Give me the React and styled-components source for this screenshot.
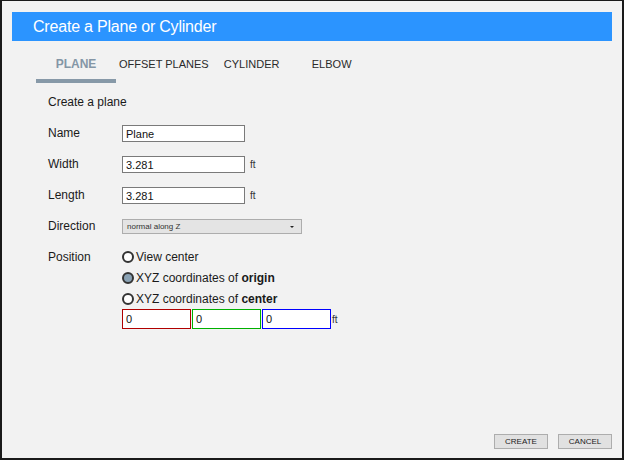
import React from "react";
import styled, { createGlobalStyle } from "styled-components";

const GlobalStyle = createGlobalStyle`
  html, body {
    margin: 0;
    padding: 0;
  }
  body {
    font-family: "Liberation Sans", Arial, sans-serif;
    background: #f2f2f2;
  }
`;

const tabs = ["PLANE", "OFFSET PLANES", "CYLINDER", "ELBOW"];

const positions = [
  { label: "View center" },
  { label: "XYZ coordinates of ", bold: "origin", checked: true },
  { label: "XYZ coordinates of ", bold: "center" },
];

export default function App() {
  return (
    <React.Fragment>
      <GlobalStyle />
      <Window>
        <TitleBar>Create a Plane or Cylinder</TitleBar>
        <TabRow>
          {tabs.map((t, i) => (
            <Tab key={t} active={i === 0}>
              {t}
            </Tab>
          ))}
        </TabRow>
        <Content>
          <Heading>Create a plane</Heading>
          <Form>
            <Label>Name</Label>
            <Field>
              <TextInput defaultValue="Plane" />
            </Field>

            <Label>Width</Label>
            <Field>
              <TextInput defaultValue="3.281" />
              <Unit>ft</Unit>
            </Field>

            <Label>Length</Label>
            <Field>
              <TextInput defaultValue="3.281" />
              <Unit>ft</Unit>
            </Field>

            <Label>Direction</Label>
            <Field>
              <Select>
                <span>normal along Z</span>
                <Caret />
              </Select>
            </Field>

            <Label>Position</Label>
            <RadioGroup>
              {positions.map((p) => (
                <RadioRow key={p.label + (p.bold || "")}>
                  <Radio checked={p.checked} />
                  <span>
                    {p.label}
                    {p.bold && <b>{p.bold}</b>}
                  </span>
                </RadioRow>
              ))}
              <CoordRow>
                <CoordInput defaultValue="0" color="#b00000" />
                <CoordInput defaultValue="0" color="#00b000" />
                <CoordInput defaultValue="0" color="#0000ff" />
                <Unit>ft</Unit>
              </CoordRow>
            </RadioGroup>
          </Form>
        </Content>
        <Footer>
          <Button>CREATE</Button>
          <Button>CANCEL</Button>
        </Footer>
      </Window>
    </React.Fragment>
  );
}

const Window = styled.div`
  box-sizing: border-box;
  width: 624px;
  height: 460px;
  border: 2px solid #1a1a1a;
  border-top-width: 1px;
  background: #f2f2f2;
  padding: 11px 10px 9px 10px;
  display: flex;
  flex-direction: column;
`;

const TitleBar = styled.div`
  height: 29px;
  background: #2b94ff;
  color: #ffffff;
  font-size: 16px;
  letter-spacing: -0.2px;
  line-height: 29px;
  padding-left: 21px;
`;

const TabRow = styled.div`
  display: flex;
  margin: 16px 0 0 24px;
`;

const Tab = styled.div`
  box-sizing: border-box;
  min-width: 80px;
  padding: 0 3px 8px;
  text-align: center;
  font-size: ${(p) => (p.active ? "12px" : "11px")};
  line-height: 14px;
  font-weight: ${(p) => (p.active ? "bold" : "normal")};
  color: ${(p) => (p.active ? "#8496a6" : "#2a2a2a")};
  border-bottom: 4px solid ${(p) => (p.active ? "#8799a8" : "transparent")};
`;

const Content = styled.div`
  flex: 1;
  padding: 12px 0 0 36px;
`;

const Heading = styled.div`
  font-size: 12px;
  line-height: 14px;
  color: #1a1a1a;
  margin-bottom: 16px;
`;

const Form = styled.div`
  display: grid;
  grid-template-columns: 74px 1fr;
  row-gap: 14px;
  align-items: center;
  font-size: 12px;
  color: #1a1a1a;
`;

const Label = styled.div`
  align-self: start;
  line-height: 17px;
`;

const Field = styled.div`
  display: flex;
  align-items: center;
  gap: 5px;
`;

const TextInput = styled.input`
  box-sizing: border-box;
  width: 123px;
  height: 17px;
  border: 1px solid #7a7a7a;
  background: #fff;
  padding: 0 3px;
  font-family: "Liberation Sans", Arial, sans-serif;
  font-size: 11px;
  color: #111;
  outline: none;
`;

const Unit = styled.span`
  font-size: 10px;
  color: #333;
`;

const Select = styled.div`
  box-sizing: border-box;
  width: 180px;
  height: 15px;
  border: 1px solid #adadad;
  background: #e4e4e4;
  display: flex;
  align-items: center;
  justify-content: space-between;
  padding: 0 7px 0 4px;
  font-size: 8px;
  color: #333;
`;

const Caret = styled.span`
  width: 0;
  height: 0;
  border-left: 2px solid transparent;
  border-right: 2px solid transparent;
  border-top: 2px solid #222;
`;

const RadioGroup = styled.div`
  display: flex;
  flex-direction: column;
  gap: 5px;
`;

const RadioRow = styled.div`
  display: flex;
  align-items: center;
  gap: 2px;
  font-size: 12px;
  line-height: 16px;
  color: #1a1a1a;
`;

const Radio = styled.span`
  box-sizing: border-box;
  width: 12px;
  height: 12px;
  border-radius: 50%;
  border: 2px solid #333;
  background: ${(p) => (p.checked ? "#8aa2b4" : "#fff")};
`;

const CoordRow = styled.div`
  display: flex;
  align-items: center;
  gap: 1px;
  margin-top: -3px;
`;

const CoordInput = styled.input`
  box-sizing: border-box;
  width: 69px;
  height: 20px;
  border: 1px solid ${(p) => p.color};
  background: #fff;
  padding: 0 3px;
  font-family: "Liberation Sans", Arial, sans-serif;
  font-size: 11px;
  color: #111;
  outline: none;
`;

const Footer = styled.div`
  display: flex;
  justify-content: flex-end;
  gap: 10px;
`;

const Button = styled.div`
  box-sizing: border-box;
  width: 54px;
  height: 15px;
  border: 1px solid #adadad;
  background: #e1e1e1;
  font-size: 8px;
  line-height: 13px;
  text-align: center;
  color: #222;
`;
